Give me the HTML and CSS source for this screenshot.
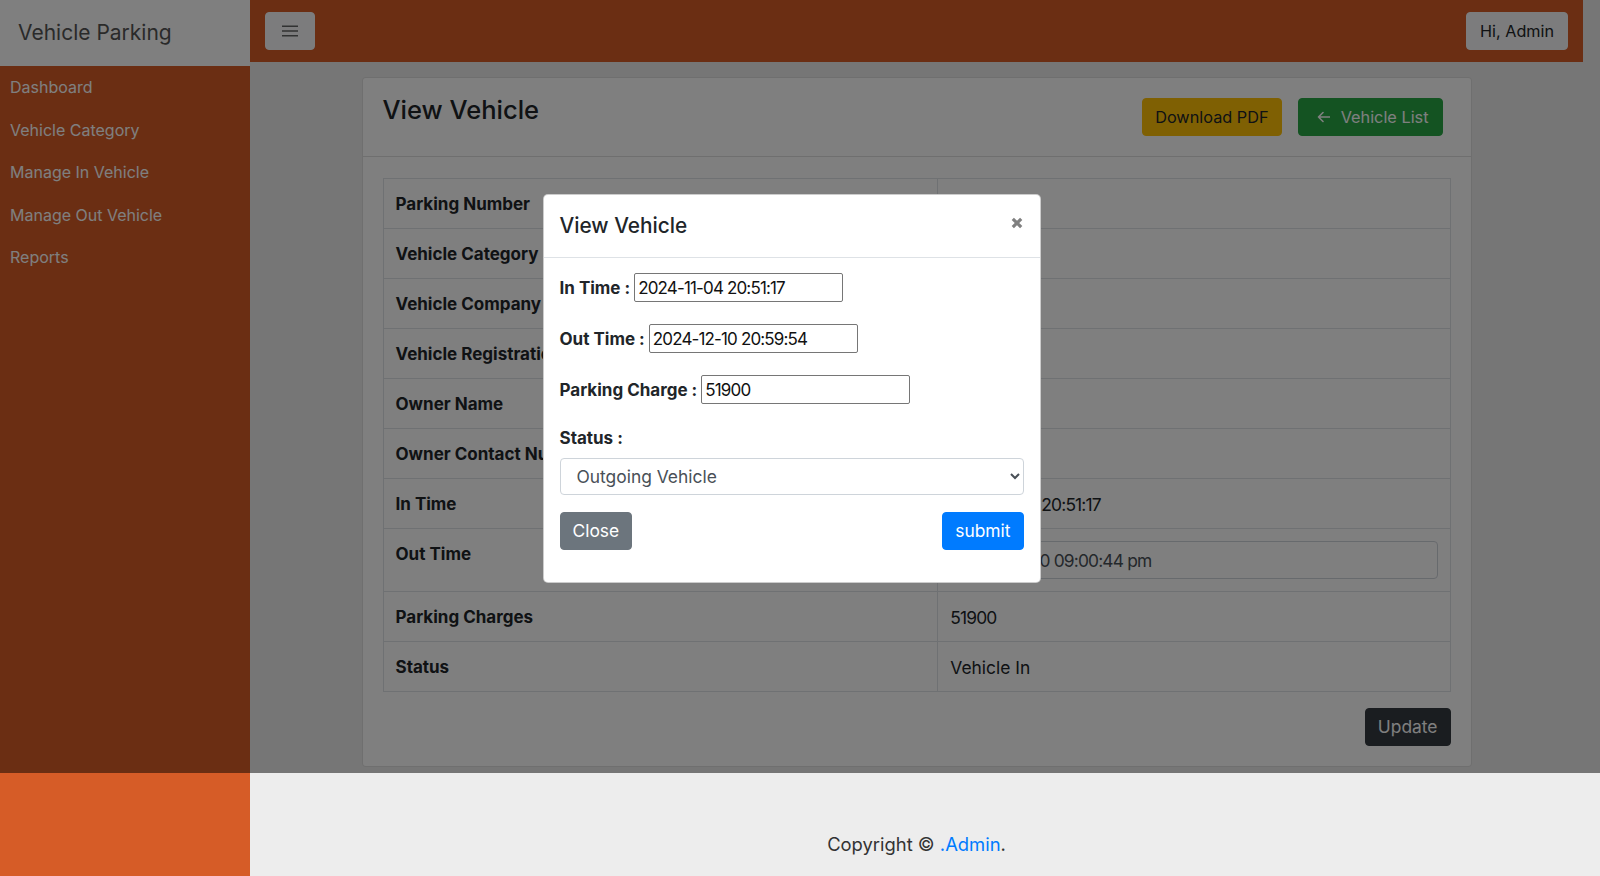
FILE: index.html
```html
<!DOCTYPE html>
<html lang="en">
<head>
<meta charset="utf-8">
<title>View Vehicle - Vehicle Parking</title>
<link rel="stylesheet" href="styles.css">
</head>
<body>
<div class="page">
  <aside class="sidebar">
    <div class="brand">Vehicle Parking</div>
    <nav class="nav">
      <a href="#">Dashboard</a>
      <a href="#">Vehicle Category</a>
      <a href="#">Manage In Vehicle</a>
      <a href="#">Manage Out Vehicle</a>
      <a href="#">Reports</a>
    </nav>
  </aside>
  <div class="main">
    <header class="topbar">
      <button class="toggler" type="button" aria-label="Toggle menu">
        <svg width="16" height="12" viewBox="0 0 16 12"><path d="M0 1.2H16M0 6H16M0 10.8H16" stroke="rgba(0,0,0,.6)" stroke-width="1.6" fill="none"/></svg>
      </button>
      <button class="user-btn" type="button">Hi, Admin</button>
    </header>
    <div class="content">
      <div class="card">
        <div class="card-header">
          <h1 class="page-title">View Vehicle</h1>
          <div class="actions">
            <a class="btn btn-warning" href="#">Download PDF</a>
            <a class="btn btn-success" href="#"><svg class="arrow" width="13" height="12" viewBox="0 0 13 12"><path d="M12.5 6H1.5M6 1.5L1.5 6L6 10.5" stroke="currentColor" stroke-width="1.6" fill="none" stroke-linecap="round" stroke-linejoin="round"/></svg>Vehicle List</a>
          </div>
        </div>
        <div class="card-body">
          <table class="info">
            <tr><th>Parking Number</th><td>451203</td></tr>
            <tr><th>Vehicle Category</th><td>Bike</td></tr>
            <tr><th>Vehicle Company</th><td>Honda</td></tr>
            <tr><th>Vehicle Registration Number</th><td>DL3C01</td></tr>
            <tr><th>Owner Name</th><td>Ravi</td></tr>
            <tr><th>Owner Contact Number</th><td>987654</td></tr>
            <tr><th>In Time</th><td><span class="num">2024-11-04 20:51:17</span></td></tr>
            <tr><th>Out Time</th><td class="input-cell"><input class="form-control num" type="text" value="2024-12-10 09:00:44 pm"></td></tr>
            <tr><th>Parking Charges</th><td><span class="num">51900</span></td></tr>
            <tr><th>Status</th><td>Vehicle In</td></tr>
          </table>
          <div class="card-actions">
            <button class="btn btn-dark" type="button">Update</button>
          </div>
        </div>
      </div>
    </div>
    <footer class="footer">Copyright © <a href="#">.Admin</a>.</footer>
  </div>
</div>

<div class="backdrop"></div>
<div class="modal-wrap">
  <div class="modal">
    <div class="modal-header">
      <h5 class="modal-title">View Vehicle</h5>
      <span class="close" aria-label="Close">
        <svg width="12" height="12" viewBox="0 0 12 12"><path d="M1.8 1.8L10.2 10.2M10.2 1.8L1.8 10.2" stroke="#808080" stroke-width="3.2" fill="none"/></svg>
      </span>
    </div>
    <div class="modal-body">
      <div class="frow"><label class="flabel">In Time :</label><input class="plain num" type="text" value="2024-11-04 20:51:17"></div>
      <div class="frow"><label class="flabel">Out Time :</label><input class="plain num" type="text" value="2024-12-10 20:59:54"></div>
      <div class="frow"><label class="flabel">Parking Charge :</label><input class="plain num" type="text" value="51900"></div>
      <div class="status-label"><label class="flabel">Status :</label></div>
      <select class="status-select">
        <option>Outgoing Vehicle</option>
        <option>Incoming Vehicle</option>
      </select>
      <div class="modal-actions">
        <button class="btn btn-secondary" type="button">Close</button>
        <button class="btn btn-primary" type="button">submit</button>
      </div>
    </div>
  </div>
</div>
</body>
</html>
```
FILE: styles.css
```css
* { box-sizing: border-box; }

html, body {
  margin: 0;
  height: 876px;
  overflow: hidden;
}

body {
  font-family: Inter, "DejaVu Sans", sans-serif;
  background: #ededed;
  color: #212529;
  position: relative;
}

.page {
  width: 1583px;
  height: 876px;
  display: flex;
}

/* Sidebar */
.sidebar {
  width: 250px;
  flex: none;
  background: #d65c27;
}

.brand {
  height: 66px;
  background: #fff;
  color: #555;
  font-size: 21px;
  line-height: 66px;
  padding-left: 18px;
}

.nav a {
  display: block;
  padding: 9.25px 10px;
  line-height: 24px;
  font-size: 16px;
  color: #fff;
  text-decoration: none;
}

/* Main */
.main {
  flex: 1;
  display: flex;
  flex-direction: column;
  min-width: 0;
}

.topbar {
  height: 62px;
  flex: none;
  background: #d65c27;
  display: flex;
  align-items: center;
  justify-content: space-between;
  padding: 0 15px;
}

.toggler {
  width: 50px;
  height: 38px;
  background: #f8f9fa;
  border: 1px solid #f8f9fa;
  border-radius: 4px;
  padding: 0;
  display: flex;
  align-items: center;
  justify-content: center;
}

.user-btn {
  height: 38px;
  padding: 0 13px;
  background: #f8f9fa;
  border: 1px solid #f8f9fa;
  border-radius: 4px;
  font-family: inherit;
  font-size: 16.2px;
  color: #212529;
}

.content {
  flex: 1;
  padding: 15px 0 6px;
}

.card {
  width: 1110px;
  margin: 0 auto;
  background: #fff;
  border: 1px solid rgba(0, 0, 0, .125);
  border-radius: 4px;
}

.card-header {
  display: flex;
  justify-content: space-between;
  align-items: flex-start;
  padding: 20px 28px 20px 20px;
  border-bottom: 1px solid rgba(0, 0, 0, .125);
}

.page-title {
  margin: 0;
  font-size: 25.5px;
  font-weight: 500;
  line-height: 23px;
  color: #212529;
}

.actions {
  display: flex;
  gap: 16px;
}

.btn {
  display: inline-flex;
  align-items: center;
  height: 38px;
  padding: 0 12px;
  border: 1px solid transparent;
  border-radius: 4px;
  font-family: inherit;
  font-size: 16.3px;
  line-height: 24px;
  text-decoration: none;
  cursor: pointer;
}

.btn-warning { background: #ffc107; border-color: #ffc107; color: #212529; }
.btn-success { background: #28a745; border-color: #28a745; color: #fff; padding-left: 18px; padding-right: 13px; }
.btn-dark { background: #343a40; border-color: #343a40; color: #fff; font-size: 17.4px; }
.btn-secondary { background: #6c757d; border-color: #6c757d; color: #fff; font-size: 17.4px; }
.btn-primary { background: #007bff; border-color: #007bff; color: #fff; font-size: 17.4px; }

.arrow { margin-right: 11px; }

.card-body {
  padding: 21px 20px 20px;
}

.info {
  width: 100%;
  border-collapse: collapse;
  margin-bottom: 16px;
  font-size: 17.4px;
}

.info th,
.info td {
  border: 1px solid #dee2e6;
  padding: 13px 12px 11px;
  line-height: 25px;
  vertical-align: top;
  text-align: left;
}

.info td.input-cell { padding: 12px; }

.info th {
  width: 52%;
  font-weight: 700;
  font-size: 17px;
}

.info td { font-weight: 400; }

.num { letter-spacing: -0.85px; }

.form-control {
  display: block;
  width: 100%;
  height: 38px;
  padding: 6px 12px;
  border: 1px solid #ced4da;
  border-radius: 4px;
  font-family: inherit;
  font-size: 17.4px;
  color: #495057;
  background: #fff;
}

.card-actions {
  display: flex;
  justify-content: flex-end;
}

.footer {
  height: 103px;
  flex: none;
  padding-top: 59px;
  line-height: 24px;
  text-align: center;
  font-size: 18.4px;
  color: #333;
}

.footer a { color: #007bff; text-decoration: none; }

/* Modal */
.backdrop {
  position: absolute;
  left: 0;
  top: 0;
  width: 100%;
  height: 773px;
  background: rgba(0, 0, 0, .5);
}

.modal-wrap {
  position: absolute;
  left: 0;
  top: 0;
  width: 1583px;
  height: 776px;
  display: flex;
  align-items: center;
  justify-content: center;
}

.modal {
  width: 498px;
  background: #fff;
  border: 1px solid rgba(0, 0, 0, .2);
  border-radius: 5px;
}

.modal-header {
  display: flex;
  justify-content: space-between;
  align-items: flex-start;
  padding: 16px;
  border-bottom: 1px solid #dee2e6;
}

.modal-title {
  margin: 0;
  font-size: 20.8px;
  font-weight: 500;
  line-height: 30px;
  color: #212529;
}

.close {
  display: flex;
  margin-top: 6px;
  margin-right: 1px;
}

.modal-body {
  padding: 15px 16px 17px;
}

.frow {
  display: flex;
  align-items: center;
  height: 30px;
  margin-bottom: 21px;
}

.flabel {
  display: block;
  font-weight: 700;
  font-size: 17px;
  line-height: 24px;
  color: #212529;
}

.frow .flabel { margin-right: 4px; }

.plain {
  width: 209px;
  height: 29px;
  padding: 0 3px;
  border: 1px solid #767676;
  border-radius: 2px;
  font-family: inherit;
  font-size: 17px;
  color: #111;
  background: #fff;
}

.status-label {
  margin-bottom: 8px;
}

.status-select {
  display: block;
  width: 100%;
  height: 37px;
  padding: 0 12px;
  border: 1px solid #ced4da;
  border-radius: 4px;
  font-family: inherit;
  font-size: 17.4px;
  color: #495057;
  background-color: #fff;
  margin-bottom: 17px;
}

.modal-actions {
  display: flex;
  justify-content: space-between;
  margin-bottom: 15px;
}
```
